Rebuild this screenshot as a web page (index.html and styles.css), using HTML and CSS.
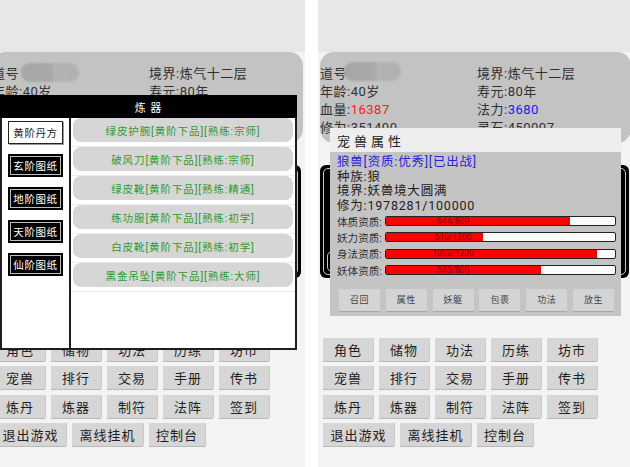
FILE: index.html
```html
<!DOCTYPE html>
<html lang="zh">
<head>
<meta charset="utf-8">
<title>修仙</title>
<link rel="stylesheet" href="styles.css">
</head>
<body>
<div class="wrap">
  <!-- LEFT SCREEN -->
  <div class="screen screen-left">
    <div class="inner">
      <div class="topbar"></div>
      <div class="card">
        <div class="cell">道号<span class="blur blur-a"></span></div>
        <div class="cell">境界:炼气十二层</div>
        <div class="cell">年龄:40岁</div>
        <div class="cell">寿元:80年</div>
        <div class="cell">血量:<span class="red">16387</span></div>
        <div class="cell">法力:<span class="blue">3680</span></div>
        <div class="cell">修为:351400</div>
        <div class="cell">灵石:450007</div>
      </div>
      <div class="log"><div class="log-in"><p>这里是修仙世界</p><p>看看你的机缘</p><div class="log-input"></div></div></div>
      <div class="grid">
        <div class="row"><span class="btn">角色</span><span class="btn">储物</span><span class="btn">功法</span><span class="btn">历练</span><span class="btn">坊市</span></div>
        <div class="row"><span class="btn">宠兽</span><span class="btn">排行</span><span class="btn">交易</span><span class="btn">手册</span><span class="btn">传书</span></div>
        <div class="row"><span class="btn">炼丹</span><span class="btn">炼器</span><span class="btn">制符</span><span class="btn">法阵</span><span class="btn">签到</span></div>
        <div class="row"><span class="btn wide">退出游戏</span><span class="btn wide">离线挂机</span><span class="btn mid">控制台</span></div>
      </div>

      <div class="forge">
        <div class="forge-head">炼 器</div>
        <div class="forge-body">
          <div class="forge-tabs">
            <span class="tab tab-on">黄阶丹方</span>
            <span class="tab">玄阶图纸</span>
            <span class="tab">地阶图纸</span>
            <span class="tab">天阶图纸</span>
            <span class="tab">仙阶图纸</span>
          </div>
          <div class="forge-list">
            <div class="item"><span class="pill">绿皮护腕[黄阶下品][熟练:宗师]</span></div>
            <div class="item"><span class="pill">破风刀[黄阶下品][熟练:宗师]</span></div>
            <div class="item"><span class="pill">绿皮靴[黄阶下品][熟练:精通]</span></div>
            <div class="item"><span class="pill">练功服[黄阶下品][熟练:初学]</span></div>
            <div class="item"><span class="pill">白皮靴[黄阶下品][熟练:初学]</span></div>
            <div class="item"><span class="pill">黑金吊坠[黄阶下品][熟练:大师]</span></div>
          </div>
        </div>
      </div>
    </div>
  </div>

  <!-- RIGHT SCREEN -->
  <div class="screen screen-right">
    <div class="inner">
      <div class="topbar"></div>
      <div class="card">
        <div class="cell">道号<span class="blur blur-b"></span></div>
        <div class="cell">境界:炼气十二层</div>
        <div class="cell">年龄:40岁</div>
        <div class="cell">寿元:80年</div>
        <div class="cell">血量:<span class="red">16387</span></div>
        <div class="cell">法力:<span class="blue">3680</span></div>
        <div class="cell">修为:351400</div>
        <div class="cell">灵石:450007</div>
      </div>
      <div class="log"><div class="log-in"><p>这里是修仙世界</p><p>看看你的机缘</p><div class="log-input"></div></div></div>
      <div class="grid">
        <div class="row"><span class="btn">角色</span><span class="btn">储物</span><span class="btn">功法</span><span class="btn">历练</span><span class="btn">坊市</span></div>
        <div class="row"><span class="btn">宠兽</span><span class="btn">排行</span><span class="btn">交易</span><span class="btn">手册</span><span class="btn">传书</span></div>
        <div class="row"><span class="btn">炼丹</span><span class="btn">炼器</span><span class="btn">制符</span><span class="btn">法阵</span><span class="btn">签到</span></div>
        <div class="row"><span class="btn wide">退出游戏</span><span class="btn wide">离线挂机</span><span class="btn mid">控制台</span></div>
      </div>

      <div class="pet">
        <div class="pet-head">宠兽属性</div>
        <div class="pet-body">
          <div class="pet-line pet-name">狼兽[资质:优秀][已出战]</div>
          <div class="pet-line">种族:狼</div>
          <div class="pet-line">境界:妖兽境大圆满</div>
          <div class="pet-line">修为:1978281/100000</div>
          <div class="stat"><span class="stat-label">体质资质:</span><span class="bar"><span class="fill" style="width:80.5%"></span><span class="bar-text">644/800</span></span></div>
          <div class="stat"><span class="stat-label">妖力资质:</span><span class="bar"><span class="fill" style="width:42.5%"></span><span class="bar-text">510/1200</span></span></div>
          <div class="stat"><span class="stat-label">身法资质:</span><span class="bar"><span class="fill" style="width:92%"></span><span class="bar-text">1092/1200</span></span></div>
          <div class="stat"><span class="stat-label">妖体资质:</span><span class="bar"><span class="fill" style="width:67.5%"></span><span class="bar-text">540/800</span></span></div>
          <div class="pet-btns">
            <span class="pbtn">召回</span><span class="pbtn">属性</span><span class="pbtn">妖躯</span><span class="pbtn">包裹</span><span class="pbtn">功法</span><span class="pbtn">放生</span>
          </div>
        </div>
      </div>
    </div>
  </div>
</div>
</body>
</html>
```

FILE: styles.css
```css
* { box-sizing: border-box; }
html, body { margin: 0; padding: 0; }
body {
  background: #ffffff;
  font-family: "Roboto", "Noto Sans CJK SC", sans-serif;
  color: #333;
}
p { margin: 0; }

.wrap {
  display: flex;
  width: 630px;
  height: 467px;
  overflow: hidden;
}

.screen {
  position: relative;
  height: 467px;
  overflow: hidden;
  background: #f3f3f3;
}
.screen-left { width: 305px; }
.screen-right { width: 312px; margin-left: 13px; }

.inner {
  position: relative;
  width: 322px;
  height: 467px;
}
.screen-left .inner { margin-left: -10px; }

.topbar {
  height: 52px;
  background: #e7e7e7;
}

.card {
  margin-left: 2px;
  width: 311px;
  height: 91px;
  background: #c3c3c3;
  border-radius: 14px;
  padding-top: 13px;
  display: grid;
  grid-template-columns: 157px 1fr;
  grid-auto-rows: 18px;
  font-size: 13px;
  letter-spacing: 0.5px;
  line-height: 18px;
  color: #303030;
  overflow: hidden;
}
.cell { white-space: nowrap; display: flex; align-items: center; }
.red { color: #ff1c1c; }
.blue { color: #1a1aff; }

.blur {
  display: inline-block;
  height: 19px;
  width: 58px;
  border-radius: 9px;
  background: linear-gradient(90deg, #a6a6a6 0%, #a9a9a9 55%, #b4b4b4 56%, #b0b0b0 100%);
  filter: blur(1px);
}
.blur-a { margin-left: 2px; margin-top: -3px; }
.blur-b { margin-left: -3px; margin-top: -6px; width: 57px; }

.log {
  margin-top: 22px;
  margin-left: 2px;
  width: 309px;
  height: 113px;
  background: #000;
  border-radius: 6px;
  padding: 3px;
}
.log-in {
  position: relative;
  height: 100%;
  border: 1px solid #c8c8c8;
  border-radius: 5px;
  color: #fff;
  font-size: 12px;
  line-height: 14px;
  padding: 10px 0 0 10px;
}
.log-input {
  position: absolute;
  left: 3px;
  bottom: 2px;
  width: 290px;
  height: 21px;
  border: 1px solid #c8c8c8;
  border-radius: 5px;
}

.grid {
  margin-top: 60px;
  padding-left: 5px;
  display: flex;
  flex-direction: column;
  gap: 5.4px;
}
.row { display: flex; gap: 6px; }
.btn {
  width: 50px;
  height: 23px;
  background: #d6d6d6;
  box-shadow: 0 1px 0 #b9b9b9, 1px 0 0 #c9c9c9;
  font-size: 13px;
  letter-spacing: 1px;
  color: #1e1e1e;
  display: flex;
  align-items: center;
  justify-content: center;
  white-space: nowrap;
}
.btn.wide { width: 71px; }
.btn.mid { width: 56px; }

/* Forge dialog (left) */
.forge {
  position: absolute;
  left: 10px;
  top: 95px;
  width: 297px;
  height: 255px;
  display: flex;
  flex-direction: column;
}
.forge-head {
  height: 23px;
  background: #000;
  color: #fff;
  font-size: 11px;
  letter-spacing: 1px;
  display: flex;
  align-items: center;
  justify-content: center;
}
.forge-body {
  flex: 1;
  display: flex;
  background: #fff;
  border: 2px solid #1e1e1e;
  border-top: none;
}
.forge-tabs {
  width: 69px;
  border-right: 2px solid #1e1e1e;
  display: flex;
  flex-direction: column;
  gap: 10px;
  padding: 3px 0 0 6px;
}
.tab {
  width: 55px;
  height: 23px;
  background: #000;
  border: 2px solid #000;
  box-shadow: inset 0 0 0 1px #bdbdbd;
  color: #fff;
  font-size: 10.5px;
  letter-spacing: 0.6px;
  display: flex;
  align-items: center;
  justify-content: center;
  white-space: nowrap;
}
.tab-on {
  background: #fff;
  color: #222;
  border: 1px solid #222;
  box-shadow: 1px 1px 0 #999;
}
.forge-list {
  flex: 1;
  display: flex;
  flex-direction: column;
}
.item {
  height: 29px;
  padding: 0 2px 4px 2px;
  border-bottom: 1px solid #ececec;
}
.pill {
  display: flex;
  height: 24px;
  border-radius: 8px;
  background: #d6d6d6;
  color: #2f992f;
  font-size: 10.5px;
  letter-spacing: 0.9px;
  align-items: center;
  justify-content: center;
  white-space: nowrap;
}

/* Pet dialog (right) */
.pet {
  position: absolute;
  left: 12px;
  top: 128px;
  width: 291px;
  display: flex;
  flex-direction: column;
}
.pet-head {
  height: 24px;
  background: #eeeeee;
  color: #222;
  font-size: 13px;
  letter-spacing: 4px;
  display: flex;
  align-items: center;
  padding-left: 7px;
}
.pet-body {
  height: 164px;
  background: #c4c4c4;
  padding: 3px 5px 0 7px;
}
.pet-line {
  height: 14.5px;
  line-height: 14.5px;
  font-size: 12.5px;
  letter-spacing: 0.8px;
  color: #202020;
  white-space: nowrap;
}
.pet-name { color: #2424d8; }
.stat {
  height: 16.3px;
  display: flex;
  align-items: center;
}
.stat-label {
  width: 48px;
  flex: none;
  font-size: 10.6px;
  color: #303030;
  white-space: nowrap;
}
.bar {
  position: relative;
  flex: 1;
  height: 10px;
  background: #fbfbfb;
  border: 1.5px solid #222;
  border-radius: 2px;
  overflow: hidden;
}
.fill {
  position: absolute;
  left: 0;
  top: 0;
  bottom: 0;
  background: #ff0000;
}
.bar-text {
  position: absolute;
  left: 0;
  top: 0;
  width: 134px;
  height: 100%;
  display: flex;
  align-items: center;
  justify-content: center;
  font-size: 8.5px;
  color: #8a0000;
  line-height: 1;
}
.pet-btns {
  margin-top: 10.5px;
  padding-left: 2px;
  display: flex;
  gap: 5.8px;
}
.pbtn {
  width: 41px;
  height: 22px;
  background: #d4d4d4;
  box-shadow: 0 1px 0 #a8a8a8;
  color: #444;
  font-size: 9px;
  letter-spacing: 0.5px;
  display: flex;
  align-items: center;
  justify-content: center;
}
```
